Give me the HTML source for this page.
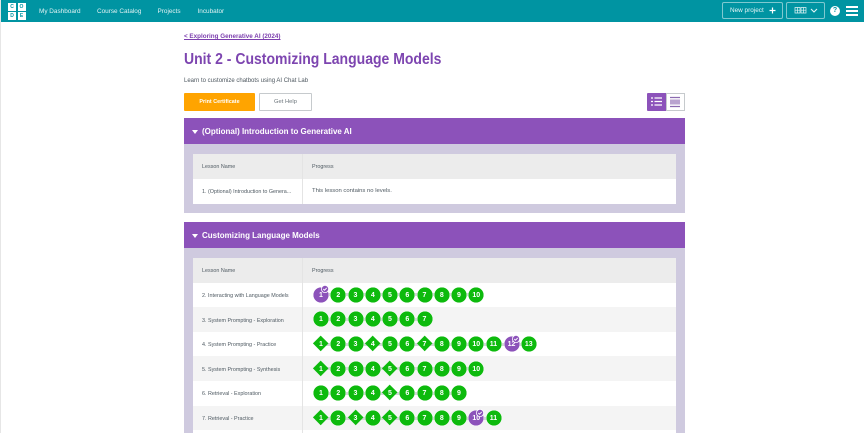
<!DOCTYPE html>
<html><head><meta charset="utf-8"><style>
html,body{margin:0;padding:0;background:#fff}
body{width:864px;height:433px;overflow:hidden;position:relative;font-family:"Liberation Sans",sans-serif}
div,a,span{position:absolute;white-space:nowrap}
.nav{top:6.5px;font-size:6.4px;line-height:9px;color:#dff2f3}
.panel{left:184px;width:501px;background:#cfcadf}
.ph{left:184px;width:501px;height:26px;background:#8c52ba;color:#fff;font-weight:bold;font-size:8.6px;line-height:27px}
.ph span{left:18px;transform:scaleX(.93);transform-origin:0 50%}
.tri{left:8px;top:11.5px;width:0;height:0;border:3.2px solid transparent;border-top:4px solid #fff;border-bottom:0}
.tw{left:193px;width:483px;background:#fff}
.hd{left:193px;width:483px;height:24.7px;background:#ececec}
.alt{left:193px;width:483px;height:24.6px;background:#f4f4f4}
.sep{left:302px;width:1px;background:#e4e4e4}
.t{font-size:5.4px;line-height:8px;color:#4f5a62}
.bar{height:3px;background:#d3d6d8}
.c,.d{width:16px;height:16px;color:#fff;font-weight:bold;font-size:7px;line-height:17px;text-align:center}
.c{border-radius:50%;background:radial-gradient(circle,#0dba0d 7.4px,#fff 7.8px)}
.c.p{background:radial-gradient(circle,#8c52ba 7.4px,#fff 7.8px)}
.d:before{content:"";position:absolute;left:2.3px;top:2.3px;width:11.4px;height:11.4px;background:#0dba0d;transform:rotate(45deg)}
.d b{position:absolute;left:0;top:0;width:16px;text-align:center}
.k{width:8px;height:8px}
</style></head><body>
<div style="left:0;top:0;width:1px;height:433px;background:#e6e6e6"></div>
<div style="left:1px;top:0;width:863px;height:22px;background:#0094a2"></div>
<div style="left:8px;top:3px;width:8px;height:8px;background:#fff;color:#0094a2;font:bold 5px/8px 'Liberation Sans',sans-serif;text-align:center">C</div>
<div style="left:17.500px;top:3px;width:8px;height:8px;background:#fff;color:#0094a2;font:bold 5px/8px 'Liberation Sans',sans-serif;text-align:center">O</div>
<div style="left:8px;top:12px;width:8px;height:8px;background:#fff;color:#0094a2;font:bold 5px/8px 'Liberation Sans',sans-serif;text-align:center">D</div>
<div style="left:17.500px;top:12px;width:8px;height:8px;background:#fff;color:#0094a2;font:bold 5px/8px 'Liberation Sans',sans-serif;text-align:center">E</div>
<div class="nav" style="left:39px">My Dashboard</div>
<div class="nav" style="left:97px">Course Catalog</div>
<div class="nav" style="left:157.500px">Projects</div>
<div class="nav" style="left:197.500px">Incubator</div>
<div style="left:722px;top:2px;width:59px;height:15px;border:1px solid #7fc9d0;border-radius:2px"></div>
<div class="nav" style="left:730px;top:6px;color:#e6f5f6">New project</div>
<svg style="position:absolute;left:769px;top:7px" width="7" height="7"><path d="M3.500 .5V6.500M.5 3.500H6.500" stroke="#fff" stroke-width="1.200"/></svg>
<div style="left:786px;top:2px;width:37px;height:15px;border:1px solid #7fc9d0;border-radius:2px"></div>
<svg style="position:absolute;left:794px;top:6px" width="26" height="9" fill="none" stroke="#e6f5f6" stroke-width=".7"><path d="M1 1.500H6V7H1ZM3.500 1.500V7M1 4.200H6M7 1.500H12V7H7ZM9.500 1.500V7M7 4.200H12"/><path d="M17 3L20 6L23 3" stroke-width="1.100"/></svg>
<div style="left:830px;top:6px;width:10px;height:10px;border-radius:50%;background:#fff;color:#0094a2;font:bold 7px/10px 'Liberation Sans',sans-serif;text-align:center">?</div>
<div style="left:846px;top:6px;width:12px;height:1.500px;background:#fff"></div>
<div style="left:846px;top:10px;width:12px;height:1.500px;background:#fff"></div>
<div style="left:846px;top:14px;width:12px;height:1.500px;background:#fff"></div>

<div style="left:184px;top:32px;font-size:6.300px;line-height:9px;color:#7c3fae;text-decoration:underline;font-weight:bold">&lt; Exploring Generative AI (2024)</div>
<div style="left:184px;top:50px;font-size:16px;line-height:20px;font-weight:bold;color:#7d45b0;transform:scaleX(.875);transform-origin:0 50%">Unit 2 - Customizing Language Models</div>
<div style="left:184px;top:77px;font-size:6px;line-height:9px;color:#4d575f">Learn to customize chatbots using AI Chat Lab</div>
<div style="left:184px;top:93px;width:71px;height:18px;background:#ffa400;border-radius:1px;color:#fff;font-weight:bold;font-size:5.400px;line-height:19px;text-align:center">Print Certificate</div>
<div style="left:259px;top:93px;width:51px;height:16px;background:#fff;border:1px solid #c6cacd;border-radius:1px;color:#6d767c;font-size:5.800px;line-height:17px;text-align:center">Get Help</div>
<div style="left:647px;top:93px;width:19px;height:18px;background:#8c52ba;border-radius:1px 0 0 1px"></div>
<div style="left:666px;top:93px;width:17px;height:16px;background:#fff;border:1px solid #c6cacd"></div>
<svg style="position:absolute;left:650px;top:96px" width="32" height="12"><path d="M1 2H3M4.500 2H12M1 5.500H3M4.500 5.500H12M1 9H3M4.500 9H12" stroke="#fff" stroke-width="1.200"/><path d="M20 1.500H30M20 10.500H30" stroke="#8c6bb0" stroke-width="1.200"/><path d="M20 3.500H30V8.500H20Z" fill="#b9a3cf"/></svg>

<div class="panel" style="top:118px;height:95px"></div>
<div class="ph" style="top:118px"><i class="tri" style="position:absolute"></i><span>(Optional) Introduction to Generative AI</span></div>
<div class="tw" style="top:154px;height:50px"></div>
<div class="hd" style="top:154px"></div>
<div class="alt" style="top:179px;background:#fff"></div>
<div class="sep" style="top:154px;height:50px"></div>
<div class="t" style="left:202px;top:163px">Lesson Name</div>
<div class="t" style="left:312px;top:163px">Progress</div>
<div class="t" style="left:202px;top:188px">1. (Optional) Introduction to Genera...</div>
<div class="t" style="left:312px;top:187px;font-size:5.900px">This lesson contains no levels.</div>

<div class="panel" style="top:222px;height:211px"></div>
<div class="ph" style="top:222px"><i class="tri" style="position:absolute"></i><span>Customizing Language Models</span></div>
<div class="tw" style="top:258px;height:175px"></div>
<div class="hd" style="top:258px"></div>
<div class="alt" style="top:307.200px"></div>
<div class="alt" style="top:356.400px"></div>
<div class="alt" style="top:405.700px"></div>
<div class="sep" style="top:258px;height:175px"></div>
<div class="t" style="left:202px;top:267px">Lesson Name</div>
<div class="t" style="left:312px;top:267px">Progress</div>
<div class="t" style="left:202px;top:292px">2. Interacting with Language Models</div>
<div class="t" style="left:202px;top:316.500px">3. System Prompting - Exploration</div>
<div class="t" style="left:202px;top:341px">4. System Prompting - Practice</div>
<div class="t" style="left:202px;top:365.500px">5. System Prompting - Synthesis</div>
<div class="t" style="left:202px;top:390px">6. Retrieval - Exploration</div>
<div class="t" style="left:202px;top:415px">7. Retrieval - Practice</div>

<div class="bar" style="left:321px;top:293px;width:155px"></div>
<div class="c p" style="left:313px;top:286.500px">1</div>
<svg class="k" style="position:absolute;left:321px;top:285px" width="8" height="8"><circle cx="4" cy="4" r="3.600" fill="#8c52ba" stroke="#fff" stroke-width=".8"/><path d="M2.300 4L3.500 5.200L5.700 2.900" fill="none" stroke="#fff" stroke-width=".9"/></svg>
<div class="c" style="left:330.300px;top:286.500px">2</div><div class="c" style="left:347.500px;top:286.500px">3</div><div class="c" style="left:364.800px;top:286.500px">4</div><div class="c" style="left:382px;top:286.500px">5</div><div class="c" style="left:399.300px;top:286.500px">6</div><div class="c" style="left:416.500px;top:286.500px">7</div><div class="c" style="left:433.800px;top:286.500px">8</div><div class="c" style="left:451px;top:286.500px">9</div><div class="c" style="left:468.300px;top:286.500px">10</div>

<div class="bar" style="left:321px;top:318px;width:103px"></div>
<div class="c" style="left:313px;top:311px">1</div><div class="c" style="left:330.300px;top:311px">2</div><div class="c" style="left:347.500px;top:311px">3</div><div class="c" style="left:364.800px;top:311px">4</div><div class="c" style="left:382px;top:311px">5</div><div class="c" style="left:399.300px;top:311px">6</div><div class="c" style="left:416.500px;top:311px">7</div>

<div class="bar" style="left:321px;top:342.500px;width:207px"></div>
<div class="d" style="left:313px;top:336px"><b>1</b></div><div class="c" style="left:330.300px;top:336px">2</div><div class="c" style="left:347.500px;top:336px">3</div><div class="d" style="left:364.800px;top:336px"><b>4</b></div><div class="c" style="left:382px;top:336px">5</div><div class="c" style="left:399.300px;top:336px">6</div><div class="d" style="left:416.500px;top:336px"><b>7</b></div><div class="c" style="left:433.800px;top:336px">8</div><div class="c" style="left:451px;top:336px">9</div><div class="c" style="left:468.300px;top:336px">10</div><div class="c" style="left:485.500px;top:336px">11</div><div class="c p" style="left:503.500px;top:336px">12</div>
<svg class="k" style="position:absolute;left:511.500px;top:334.500px" width="8" height="8"><circle cx="4" cy="4" r="3.600" fill="#8c52ba" stroke="#fff" stroke-width=".8"/><path d="M2.300 4L3.500 5.200L5.700 2.900" fill="none" stroke="#fff" stroke-width=".9"/></svg>
<div class="c" style="left:520.800px;top:336px">13</div>

<div class="bar" style="left:321px;top:367px;width:155px"></div>
<div class="d" style="left:313px;top:360.500px"><b>1</b></div><div class="c" style="left:330.300px;top:360.500px">2</div><div class="c" style="left:347.500px;top:360.500px">3</div><div class="c" style="left:364.800px;top:360.500px">4</div><div class="d" style="left:382px;top:360.500px"><b>5</b></div><div class="c" style="left:399.300px;top:360.500px">6</div><div class="c" style="left:416.500px;top:360.500px">7</div><div class="c" style="left:433.800px;top:360.500px">8</div><div class="c" style="left:451px;top:360.500px">9</div><div class="c" style="left:468.300px;top:360.500px">10</div>

<div class="bar" style="left:321px;top:391.500px;width:138px"></div>
<div class="c" style="left:313px;top:385px">1</div><div class="c" style="left:330.300px;top:385px">2</div><div class="c" style="left:347.500px;top:385px">3</div><div class="c" style="left:364.800px;top:385px">4</div><div class="d" style="left:382px;top:385px"><b>5</b></div><div class="c" style="left:399.300px;top:385px">6</div><div class="c" style="left:416.500px;top:385px">7</div><div class="c" style="left:433.800px;top:385px">8</div><div class="c" style="left:451px;top:385px">9</div>

<div class="bar" style="left:321px;top:416.500px;width:173px"></div>
<div class="d" style="left:313px;top:410px"><b>1</b></div><div class="c" style="left:330.300px;top:410px">2</div><div class="d" style="left:347.500px;top:410px"><b>3</b></div><div class="c" style="left:364.800px;top:410px">4</div><div class="d" style="left:382px;top:410px"><b>5</b></div><div class="c" style="left:399.300px;top:410px">6</div><div class="c" style="left:416.500px;top:410px">7</div><div class="c" style="left:433.800px;top:410px">8</div><div class="c" style="left:451px;top:410px">9</div><div class="c p" style="left:468.300px;top:410px">10</div>
<svg class="k" style="position:absolute;left:476.300px;top:408.500px" width="8" height="8"><circle cx="4" cy="4" r="3.600" fill="#8c52ba" stroke="#fff" stroke-width=".8"/><path d="M2.300 4L3.500 5.200L5.700 2.900" fill="none" stroke="#fff" stroke-width=".9"/></svg>
<div class="c" style="left:485.500px;top:410px">11</div>
</body></html>
